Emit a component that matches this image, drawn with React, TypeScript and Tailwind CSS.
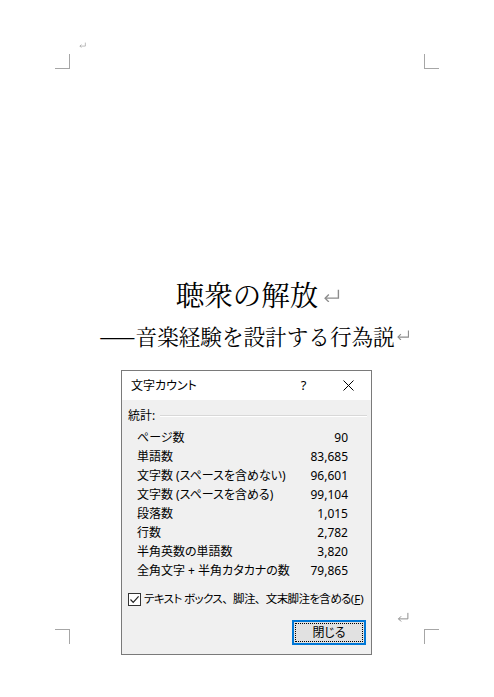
import React from "react";

const uiFont = {
  fontFamily: '"Noto Sans", "Noto Sans CJK JP", sans-serif',
};

function ReturnMark({ w, h, className }: { w: number; h: number; className?: string }) {
  // Word-style paragraph mark: hook going up on the right, arrow pointing left
  return (
    <svg width={w} height={h} viewBox="0 0 16 12" className={className} fill="none">
      <path d="M14.5 0.5 V8.5 H2" stroke="#8c8c8c" strokeWidth="1.3" />
      <path d="M5.5 5 L2 8.5 L5.5 12" stroke="#8c8c8c" strokeWidth="1.3" />
    </svg>
  );
}

function CornerMark({ pos }: { pos: "tl" | "tr" | "bl" | "br" }) {
  const base = "absolute w-[15px] h-[15px] border-[#a6a6a6]";
  const cls = {
    tl: "left-[55px] top-[54px] border-r border-b",
    tr: "left-[424px] top-[54px] border-l border-b",
    bl: "left-[55px] top-[629px] border-r border-t",
    br: "left-[424px] top-[629px] border-l border-t",
  }[pos];
  return <div className={`${base} ${cls}`} />;
}

const stats: [string, string][] = [
  ["ページ数", "90"],
  ["単語数", "83,685"],
  ["文字数 (スペースを含めない)", "96,601"],
  ["文字数 (スペースを含める)", "99,104"],
  ["段落数", "1,015"],
  ["行数", "2,782"],
  ["半角英数の単語数", "3,820"],
  ["全角文字 + 半角カタカナの数", "79,865"],
];

// full-width comma kept at its normal width inside proportional text
const Comma = () => <span className="[font-feature-settings:normal]">、</span>;

export default function App() {
  return (
    <div className="relative w-[494px] h-[697px] bg-white overflow-hidden">
      <CornerMark pos="tl" />
      <CornerMark pos="tr" />
      <CornerMark pos="bl" />
      <CornerMark pos="br" />
      <ReturnMark w={7} h={6} className="absolute left-[79px] top-[42px]" />
      <ReturnMark w={12} h={10} className="absolute left-[397px] top-[612px]" />

      <div className="flex flex-col items-center pt-[276px]">
        <div
          className="relative h-[36px] leading-[36px] text-[28.5px] text-black"
          style={{ fontFamily: '"Noto Serif CJK JP", "Noto Sans CJK JP", serif' }}
        >
          <span className="relative">
            聴衆の解放
            <ReturnMark w={17} h={13} className="absolute left-[calc(100%+5px)] top-[16px]" />
          </span>
        </div>

        <div
          className="mt-[10px] h-[28px] leading-[28px] text-[21.6px] text-black"
          style={{ fontFamily: '"Noto Serif CJK JP", "Noto Sans CJK JP", serif' }}
        >
          <span className="relative">
            <span style={{ fontFamily: '"Noto Sans CJK JP", sans-serif' }}>——</span>
            音楽経験を設計する行為説
            <ReturnMark w={14} h={10} className="absolute left-[calc(100%+1px)] top-[10px]" />
          </span>
        </div>

        <div
          className="self-start ml-[121px] mt-[20px] w-[251px] h-[285px] border border-[#7a7a7a] flex flex-col text-[12px] text-black [font-feature-settings:'palt']"
          style={uiFont}
        >
          <div className="h-[29px] bg-white flex items-center">
            <span className="pl-[9px]">文字カウント</span>
            <span className="ml-auto w-[45px] text-center text-[13px]">?</span>
            <span className="w-[45px] flex justify-center">
              <svg width="11" height="11" viewBox="0 0 11 11">
                <path d="M0.5 0.5 L10.5 10.5 M10.5 0.5 L0.5 10.5" stroke="#000" strokeWidth="1" />
              </svg>
            </span>
          </div>

          <div className="flex-1 bg-[#f0f0f0] flex flex-col pt-[8px]">
            <div className="flex items-center h-[16px] pl-[6px] pr-[4px]">
              <span>統計:</span>
              <div className="flex-1 ml-[5px] h-[2px] border-t border-[#d8d8d8] border-b border-b-white" />
            </div>

            <div className="mt-[4px] flex flex-col pl-[15px] pr-[23px]">
              {stats.map(([label, value]) => (
                <div key={label} className="flex justify-between h-[19px] leading-[19px]">
                  <span>{label}</span>
                  <span>{value}</span>
                </div>
              ))}
            </div>

            <div className="mt-[11px] flex items-center h-[16px] pl-[6px] whitespace-nowrap">
              <div className="shrink-0 w-[13px] h-[13px] border border-[#333] bg-white flex items-center justify-center">
                <svg width="11" height="11" viewBox="0 0 11 11">
                  <path d="M1.5 5.5 L4.2 8.3 L9.6 2.4" stroke="#222" strokeWidth="1.2" fill="none" />
                </svg>
              </div>
              <span className="ml-[3px] text-[11.5px]">
                <span className="tracking-[-0.6px]">
                  テキスト ボックス<Comma />脚注<Comma />文末脚注を含める
                </span>
                (<span className="underline">F</span>)
              </span>
            </div>

            <div className="mt-[13px] flex justify-end pr-[5px]">
              <div className="w-[74px] h-[25px] border-2 border-[#0078d7] bg-[#e1e1e1] p-[1px]">
                <div className="w-full h-full border border-dotted border-black flex items-center justify-center">
                  閉じる
                </div>
              </div>
            </div>
          </div>
        </div>
      </div>
    </div>
  );
}
